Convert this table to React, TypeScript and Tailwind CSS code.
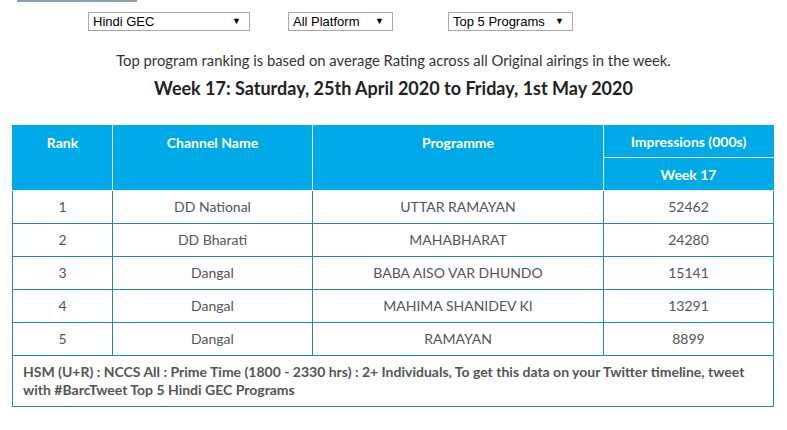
const rows = [
  { rank: 1, channel: 'DD National', programme: 'UTTAR RAMAYAN', imp: '52462' },
  { rank: 2, channel: 'DD Bharati', programme: 'MAHABHARAT', imp: '24280' },
  { rank: 3, channel: 'Dangal', programme: 'BABA AISO VAR DHUNDO', imp: '15141' },
  { rank: 4, channel: 'Dangal', programme: 'MAHIMA SHANIDEV KI', imp: '13291' },
  { rank: 5, channel: 'Dangal', programme: 'RAMAYAN', imp: '8899' },
]

function FakeSelect({ label, className }: { label: string; className: string }) {
  return (
    <div
      className={`flex h-[19px] items-center justify-between border border-[#a9a9a9] bg-white pl-[4px] pr-[8px] text-[13px] text-black font-['Liberation_Sans',Arial,sans-serif] ${className}`}
    >
      <span>{label}</span>
      <span className="text-[9px]">▼</span>
    </div>
  )
}

export default function App() {
  return (
    <div className="w-[787px] h-[430px] bg-white font-['Lato',sans-serif] overflow-hidden">
      <div className="ml-[17px] h-[2px] w-[120px] bg-[#8a9cb8]" />

      {/* Filters */}
      <div className="mt-[10px] flex">
        <FakeSelect label="Hindi GEC" className="ml-[88px] w-[162px]" />
        <FakeSelect label="All Platform" className="ml-[38px] w-[105px]" />
        <FakeSelect label="Top 5 Programs" className="ml-[55px] w-[125px]" />
      </div>

      <p className="mt-[19px] text-center text-[14.8px] leading-[20px] text-[#333]">
        Top program ranking is based on average Rating across all Original airings in the week.
      </p>
      <h2 className="mt-[5px] text-center text-[18px] leading-[26px] font-bold text-[#222]">
        Week 17: Saturday, 25th April 2020 to Friday, 1st May 2020
      </h2>

      {/* Ranking table */}
      <table className="ml-[12px] mt-[24px] w-[761px] border-collapse text-[14px] text-[#555] table-fixed">
        <colgroup>
          <col className="w-[100px]" />
          <col className="w-[200px]" />
          <col className="w-[291px]" />
          <col className="w-[170px]" />
        </colgroup>
        <thead className="bg-[#00aae9] text-white font-bold">
          <tr className="h-[32px]">
            <th rowSpan={2} className="border border-[#e6f6fc] border-l-[#00aae9] border-t-[#00aae9] align-top pt-[6px]">Rank</th>
            <th rowSpan={2} className="border border-[#e6f6fc] border-t-[#00aae9] align-top pt-[6px]">Channel Name</th>
            <th rowSpan={2} className="border border-[#e6f6fc] border-t-[#00aae9] align-top pt-[6px]">Programme</th>
            <th className="border border-[#e6f6fc] border-t-[#00aae9] border-r-[#00aae9]">Impressions (000s)</th>
          </tr>
          <tr className="h-[33px]">
            <th className="border border-[#e6f6fc] border-r-[#00aae9]">Week 17</th>
          </tr>
        </thead>
        <tbody>
          {rows.map((r) => (
            <tr key={r.rank} className="h-[33px]">
              <td className="border border-[#258b9a] text-center pb-[1px]">{r.rank}</td>
              <td className="border border-[#258b9a] text-center pb-[1px]">{r.channel}</td>
              <td className="border border-[#258b9a] text-center pb-[1px]">{r.programme}</td>
              <td className="border border-[#258b9a] text-center pb-[1px]">{r.imp}</td>
            </tr>
          ))}
          <tr>
            <td colSpan={4} className="border border-[#258b9a] px-[10px] pt-[7px] pb-[7px] font-bold leading-[18px] text-[14px]">
              HSM (U+R) : NCCS All : Prime Time (1800 - 2330 hrs) : 2+ Individuals, To get this data on your Twitter timeline, tweet with #BarcTweet Top 5 Hindi GEC Programs
            </td>
          </tr>
        </tbody>
      </table>
    </div>
  )
}
